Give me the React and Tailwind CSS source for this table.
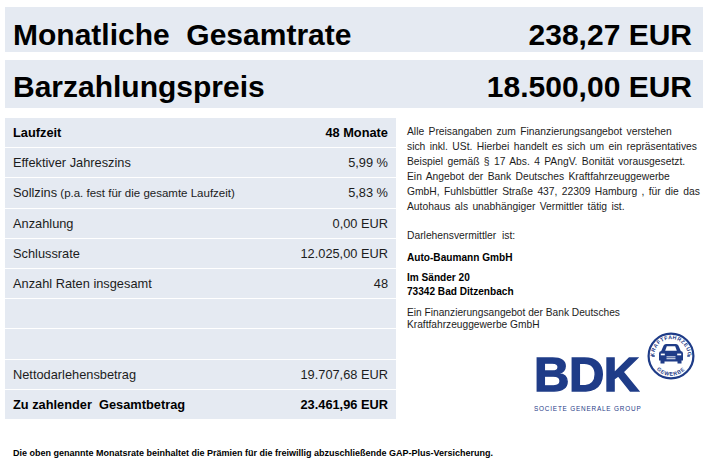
import React from "react";

const rows = [
  { l: "Laufzeit", r: "48 Monate", bold: true },
  { l: "Effektiver Jahreszins", r: "5,99 %" },
  { l: "Sollzins", sub: " (p.a. fest für die gesamte Laufzeit)", r: "5,83 %" },
  { l: "Anzahlung", r: "0,00 EUR" },
  { l: "Schlussrate", r: "12.025,00 EUR" },
  { l: "Anzahl Raten insgesamt", r: "48" },
  { l: "", r: "" },
  { l: "", r: "" },
  { l: "Nettodarlehensbetrag", r: "19.707,68 EUR" },
  { l: "Zu zahlender  Gesamtbetrag", r: "23.461,96 EUR", bold: true },
];

function Badge() {
  return (
    <svg width="48" height="48" viewBox="0 0 48 48">
      <defs>
        <path id="topArc" d="M7.2,24 A16.8,16.8 0 0 1 40.8,24" />
        <path id="botArc" d="M4.2,24 A19.8,19.8 0 0 0 43.8,24" />
      </defs>
      <circle cx="24" cy="24" r="22.4" fill="#fff" stroke="#1f3c88" strokeWidth="2.2" />
      <text fontSize="5.3" fontWeight="700" fill="#1f3c88" fontFamily="'Liberation Sans', Arial, sans-serif" letterSpacing="0.5">
        <textPath href="#topArc" startOffset="50%" textAnchor="middle">KRAFTFAHRZEUG</textPath>
      </text>
      <text fontSize="5.3" fontWeight="700" fill="#1f3c88" fontFamily="'Liberation Sans', Arial, sans-serif" letterSpacing="0.7">
        <textPath href="#botArc" startOffset="50%" textAnchor="middle">GEWERBE</textPath>
      </text>
      <rect x="5.2" y="23.3" width="2.6" height="1.4" fill="#1f3c88" />
      <rect x="40.2" y="23.3" width="2.6" height="1.4" fill="#1f3c88" />
      <path
        d="M12,28.5 L12,21.5 Q12,19.6 14.2,19.1 L16.6,13.6 Q17.3,12 19,12 L29,12 Q30.7,12 31.4,13.6 L33.8,19.1 Q36,19.6 36,21.5 L36,28.5 L34.5,28.5 L34.5,31.5 L30.5,31.5 L30.5,29.5 L17.5,29.5 L17.5,31.5 L13.5,31.5 L13.5,28.5 Z"
        fill="#1f3c88"
      />
      <path d="M18.2,18.8 L19.8,14.2 L28.2,14.2 L29.8,18.8 Z" fill="#fff" />
      <rect x="13.8" y="21.6" width="4" height="1.7" fill="#fff" />
      <rect x="30.2" y="21.6" width="4" height="1.7" fill="#fff" />
      <rect x="19.5" y="24.4" width="9" height="0.9" fill="#fff" />
      <rect x="19.5" y="26.3" width="9" height="0.9" fill="#fff" />
    </svg>
  );
}

export default function App() {
  return (
    <div
      className="w-[710px] h-[462px] bg-white pl-[5px] pr-[7px] pt-[7px] text-[#111] overflow-hidden"
      style={{ fontFamily: "'Liberation Sans', Arial, sans-serif" }}
    >
      <div className="h-[45px] bg-[#e5eaf2] flex justify-between items-start pt-[13px] pl-[8px] pr-[11px]">
        <span className="text-[30px] leading-[30px] font-bold text-black whitespace-pre">Monatliche  Gesamtrate</span>
        <span className="text-[30px] leading-[30px] font-bold text-black">238,27 EUR</span>
      </div>
      <div className="mt-[8px] h-[48px] bg-[#e5eaf2] flex justify-between items-start pt-[12px] pl-[8px] pr-[11px]">
        <span className="text-[30px] leading-[30px] font-bold text-black">Barzahlungspreis</span>
        <span className="text-[30px] leading-[30px] font-bold text-black">18.500,00 EUR</span>
      </div>

      <div className="mt-[10px] flex">
        <div className="w-[391px] flex flex-col gap-px">
          {rows.map((r, i) => (
            <div
              key={i}
              className={
                "h-[29.2px] bg-[#e5eaf2] flex items-center justify-between px-[8px] text-[12.8px] whitespace-pre " +
                (r.bold ? "font-bold text-black" : "text-[#1c1c1c]")
              }
            >
              <span>
                {r.l}
                {r.sub && <span className="text-[11.5px]">{r.sub}</span>}
              </span>
              <span>{r.r}</span>
            </div>
          ))}
        </div>

        <div className="ml-[11px] flex-1 pt-[5.5px] text-[10.3px] text-[#1c1c1c]">
          <div className="leading-[15px] [word-spacing:1.5px] whitespace-pre">
            <div>Alle Preisangaben zum Finanzierungsangebot verstehen</div>
            <div>sich inkl. USt. Hierbei handelt es sich um ein repräsentatives</div>
            <div>Beispiel gemäß § 17 Abs. 4 PAngV. Bonität vorausgesetzt.</div>
            <div>Ein Angebot der Bank Deutsches Kraftfahrzeuggewerbe</div>
            <div>GmbH, Fuhlsbüttler Straße 437, 22309 Hamburg , für die das</div>
            <div>Autohaus als unabhängiger Vermittler tätig ist.</div>
          </div>
          <div className="mt-[14px] leading-[15px] whitespace-pre">Darlehensvermittler  ist:</div>
          <div className="mt-[7px] leading-[15px] font-bold text-[10.1px] text-black">Auto-Baumann GmbH</div>
          <div className="mt-[6px] leading-[14px] font-bold text-[10.1px] text-black">
            <div>Im Sänder 20</div>
            <div>73342 Bad Ditzenbach</div>
          </div>
          <div className="mt-[8px] leading-[12px] text-[10.2px]">
            <div>Ein Finanzierungsangebot der Bank Deutsches</div>
            <div>Kraftfahrzeuggewerbe GmbH</div>
          </div>
          <div className="flex ml-[127px]">
            <div className="w-[110px] flex flex-col pt-[19.5px]">
              <div className="text-[49px] leading-[49px] font-bold text-[#1f3c88] [-webkit-text-stroke:1.4px_#1f3c88] tracking-[-0.5px]">
                BDK
              </div>
              <div className="mt-[6px] text-[6.4px] leading-[8px] tracking-[0.8px] text-[#1f3c88] whitespace-nowrap">
                SOCIETE GENERALE GROUP
              </div>
            </div>
            <div className="ml-[3px] mt-[1px]">
              <Badge />
            </div>
          </div>
        </div>
      </div>

      <div className="mt-[29px] pl-[8px] text-[9px] leading-[10px] font-bold text-black whitespace-nowrap">
        Die oben genannte Monatsrate beinhaltet die Prämien für die freiwillig abzuschließende GAP-Plus-Versicherung.
      </div>
    </div>
  );
}
